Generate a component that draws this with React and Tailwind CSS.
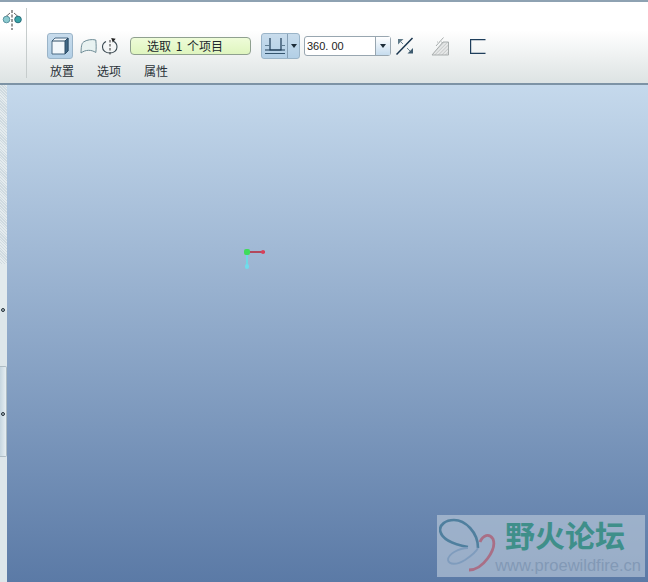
const cjk = { fontFamily: '"Noto Sans CJK SC", "Liberation Sans", sans-serif' };

function MirrorIcon() {
  return (
    <svg width="22" height="22" viewBox="0 0 22 22" className="block">
      <path d="M12 1V21" stroke="#333" strokeWidth="1" strokeDasharray="3 1.5" />
      <path d="M6 7.5L10 4" stroke="#666" strokeWidth="1" fill="none" />
      <path d="M14 4L18 7.5" stroke="#666" strokeWidth="1" fill="none" />
      <circle cx="6.5" cy="10.5" r="3.3" fill="#8ccbd0" stroke="#5a93a0" />
      <circle cx="18" cy="10.5" r="3.3" fill="#3aa5a8" stroke="#2b6f7c" />
    </svg>
  );
}

function SolidIcon() {
  return (
    <svg width="18" height="18" viewBox="0 0 18 18">
      <path d="M1 4L4 1H17V14L14 17H1Z" fill="#f2f7fb" stroke="#4a6a84" strokeWidth="1" />
      <path d="M14 4V17L17 14V1Z" fill="#3f6785" stroke="#2c4c66" strokeWidth="1" />
      <path d="M1 4H14L17 1" fill="none" stroke="#2c4c66" strokeWidth="1" />
    </svg>
  );
}

function SurfaceIcon() {
  return (
    <svg width="17" height="16" viewBox="0 0 17 16">
      <path d="M1 15C1.2 9 1.5 5.5 3.5 4C6.5 1.8 12 1 15.8 2C16.3 7 16.3 11 15.8 14.5C11.5 11.5 5.5 11.5 1 15Z" fill="#e8f2f1" stroke="#6f8d97" strokeWidth="1" />
    </svg>
  );
}

function RevolveIcon() {
  return (
    <svg width="18" height="18" viewBox="0 0 18 18" fill="none">
      <path d="M9 3V17.5" stroke="#333" strokeWidth="1" strokeDasharray="2.5 1.5" />
      <path d="M5 4.6C2.6 5.8 1.5 7.8 1.5 10C1.5 13.6 4.8 16 8.8 16C12.8 16 16 13.6 16 10C16 7.6 14.8 5.4 12.4 4.2" stroke="#3b4a52" strokeWidth="1.1" />
      <path d="M10.2 1L14.6 1.8L11.8 5.6Z" fill="#222" />
    </svg>
  );
}

function DepthIcon() {
  return (
    <svg width="22" height="18" viewBox="0 0 22 18" fill="none" stroke="#1f3c57">
      <path d="M6 1V13H17V1" strokeWidth="1.2" />
      <path d="M1 13H21" strokeWidth="1" />
      <path d="M1 8.5H5M18 8.5H21" stroke="#607d92" strokeWidth="1" />
      <path d="M1 16.5H21" stroke="#35566f" strokeWidth="1" />
    </svg>
  );
}

function Caret() {
  return <span className="block w-0 h-0 border-x-[3.5px] border-x-transparent border-t-[4px] border-t-[#1d2c38]" />;
}

function FlipIcon() {
  return (
    <svg width="18" height="18" viewBox="0 0 18 18" fill="none">
      <path d="M0.5 17.5L16.5 1" stroke="#18344d" strokeWidth="1.5" />
      <path d="M2 2H7.5L2 7.5Z" fill="#5f7988" />
      <path d="M17 16.5H11.5L17 11Z" fill="#3d5a6e" />
      <path d="M4 4L7 7M11 11L14 14" stroke="#6f8795" strokeWidth="1" />
    </svg>
  );
}

function ThickenIcon() {
  return (
    <svg width="19" height="19" viewBox="0 0 19 19" fill="none">
      <defs>
        <pattern id="hatch" width="2.5" height="2.5" patternUnits="userSpaceOnUse" patternTransform="rotate(45)">
          <rect width="2.5" height="2.5" fill="#e6e8e8" />
          <path d="M0 0V2.5" stroke="#b4b8b8" strokeWidth="1" />
        </pattern>
      </defs>
      <path d="M1 18L12 5H17.5V18Z" fill="url(#hatch)" stroke="#a8adad" strokeWidth="1" />
      <path d="M12.5 0.5L5 9" stroke="#a8adad" strokeWidth="1" />
      <path d="M6 5H12" stroke="#b8bcbc" strokeWidth="1" strokeDasharray="1 1" />
    </svg>
  );
}

function OpenRect() {
  return (
    <svg width="16" height="15" viewBox="0 0 16 15" fill="none" stroke="#1f3f5c" strokeWidth="1.2">
      <path d="M15.5 0.6H0.6V14.4H15.5" />
    </svg>
  );
}

function Butterfly() {
  return (
    <svg width="57" height="56" viewBox="0 0 57 56" fill="none" className="shrink-0">
      <path d="M39 30C39 14 26 2 15 2C6 2 1 7 1 12C2 20 12 26 29 29" stroke="#4f7f9e" strokeWidth="2.6" />
      <path d="M41 24C44 17 50 15 54 21C58 31 44 52 30 52" stroke="#a96f86" strokeWidth="2.8" />
      <path d="M29 30C20 30 9 36 9 42C10 47 18 47 26 42C32 38 37 34 39 30" stroke="#7f9cbd" strokeWidth="1.8" />
    </svg>
  );
}

export default function App() {
  return (
    <div className="w-[648px] h-[582px] flex flex-col overflow-hidden bg-white" style={cjk}>
      <header className="h-[85px] shrink-0 flex bg-gradient-to-b from-white from-35% to-[#dde3e3] border-t-2 border-t-[#8ea2b2] border-b-2 border-b-[#7d93a5]">
        <div className="w-[27px] shrink-0 mt-[6px] mb-[5px] pt-[1px] border-r border-r-[#c6cccc]">
          <MirrorIcon />
        </div>
        <div className="flex flex-col pl-[20px] pt-[31px]">
          <div className="flex items-center h-[26px]">
            <button className="w-[26px] h-[26px] flex items-center justify-center rounded-[3px] bg-gradient-to-b from-[#c8dcec] to-[#b2cfe6] border border-[#9ab4c8]">
              <SolidIcon />
            </button>
            <span className="ml-[7px] flex"><SurfaceIcon /></span>
            <span className="ml-[4px] flex"><RevolveIcon /></span>
            <div className="ml-[11px] w-[121px] h-[18px] rounded-[4px] border border-[#8fa08f] bg-gradient-to-b from-[#eefcd8] to-[#dff5bf] text-[12px] leading-[16px] text-[#20282c] pl-[16px] whitespace-pre [word-spacing:2px]">
              选取 1 个项目
            </div>
            <div className="ml-[10px] w-[39px] h-[26px] flex rounded-[3px] bg-gradient-to-b from-[#c8dcec] to-[#b2cfe6] border border-[#9ab4c8]">
              <div className="w-[26px] flex items-center justify-center border-r border-r-[#86a0b6]">
                <DepthIcon />
              </div>
              <div className="flex-1 flex items-center justify-center"><Caret /></div>
            </div>
            <div className="ml-[4px] w-[87px] h-[20px] flex rounded-[3px] border border-[#98a6b0] bg-white">
              <span className="flex-1 pl-[2px] text-[11px] leading-[18px] text-[#222]" style={{ fontFamily: '"Liberation Sans", sans-serif' }}>360. 00</span>
              <div className="w-[15px] flex items-center justify-center border-l border-l-[#98a6b0] bg-gradient-to-b from-white to-[#c6dcee]"><Caret /></div>
            </div>
            <span className="ml-[5px] flex"><FlipIcon /></span>
            <span className="ml-[17px] flex"><ThickenIcon /></span>
            <span className="ml-[20px] flex"><OpenRect /></span>
          </div>
          <nav className="flex mt-[3px] pl-[3px] text-[12px] leading-[18px] text-[#2a3238]">
            <span className="w-[47px]">放置</span>
            <span className="w-[47px]">选项</span>
            <span className="w-[47px]">属性</span>
          </nav>
        </div>
      </header>
      <main className="flex-1 flex min-h-0">
        <aside className="w-[7px] shrink-0 bg-[#dde6ea] flex flex-col relative">
          <div className="h-[179px] bg-[repeating-linear-gradient(45deg,#e4ebee_0,#e4ebee_1px,#cfdae0_1px,#cfdae0_2px)]" />
          <div className="h-[46px] bg-[#e2eaed]" />
          <span className="absolute left-[1px] top-[223px] w-[4px] h-[4px] rounded-full border border-[#26323a] bg-[#aab8c0]" />
          <div className="h-[56px]" />
          <div className="h-[91px] border-y border-r border-[#aebcc4] rounded-r-[2px] bg-gradient-to-r from-[#c6d6e0] to-[#e6eef2]" />
          <span className="absolute left-[1px] top-[327px] w-[4px] h-[4px] rounded-full border border-[#26323a] bg-[#aab8c0]" />
        </aside>
        <section className="flex-1 relative bg-gradient-to-b from-[#c5d9ec] to-[#5b7aa6]">
          <div className="absolute left-[239px] top-[166px] h-[17px] w-[1.5px] bg-[#6fd8e4]" />
          <div className="absolute left-[242px] top-[166px] w-[16px] h-[1.5px] bg-[#b2485c]" />
          <div className="absolute left-[237px] top-[164px] w-[6px] h-[6px] rounded-[2px] bg-[#3fdc5a]" />
          <div className="absolute left-[254px] top-[165px] w-[4px] h-[4px] rounded-full bg-[#d8405a]" />
          <div className="absolute left-[238px] top-[179px] w-[4px] h-[5px] rounded-full bg-[#70dcec]" />
          <div className="absolute left-[430px] top-[430px] w-[208px] h-[62px] bg-[#b4c3d6]/70 flex">
            <div className="pl-[2px] pt-[3px] shrink-0"><Butterfly /></div>
            <div className="flex flex-col items-end flex-1 min-w-0 pr-[4px]">
              <span className="mt-[3px] mr-[16px] text-[30px] leading-[33px] font-bold text-[#3f8f8a] whitespace-nowrap">野火论坛</span>
              <span className="mt-[5px] text-[16.5px] leading-[18px] text-[#8299b6] whitespace-nowrap" style={{ fontFamily: '"Liberation Sans", sans-serif' }}>www.proewildfire.cn</span>
            </div>
          </div>
        </section>
      </main>
    </div>
  );
}
